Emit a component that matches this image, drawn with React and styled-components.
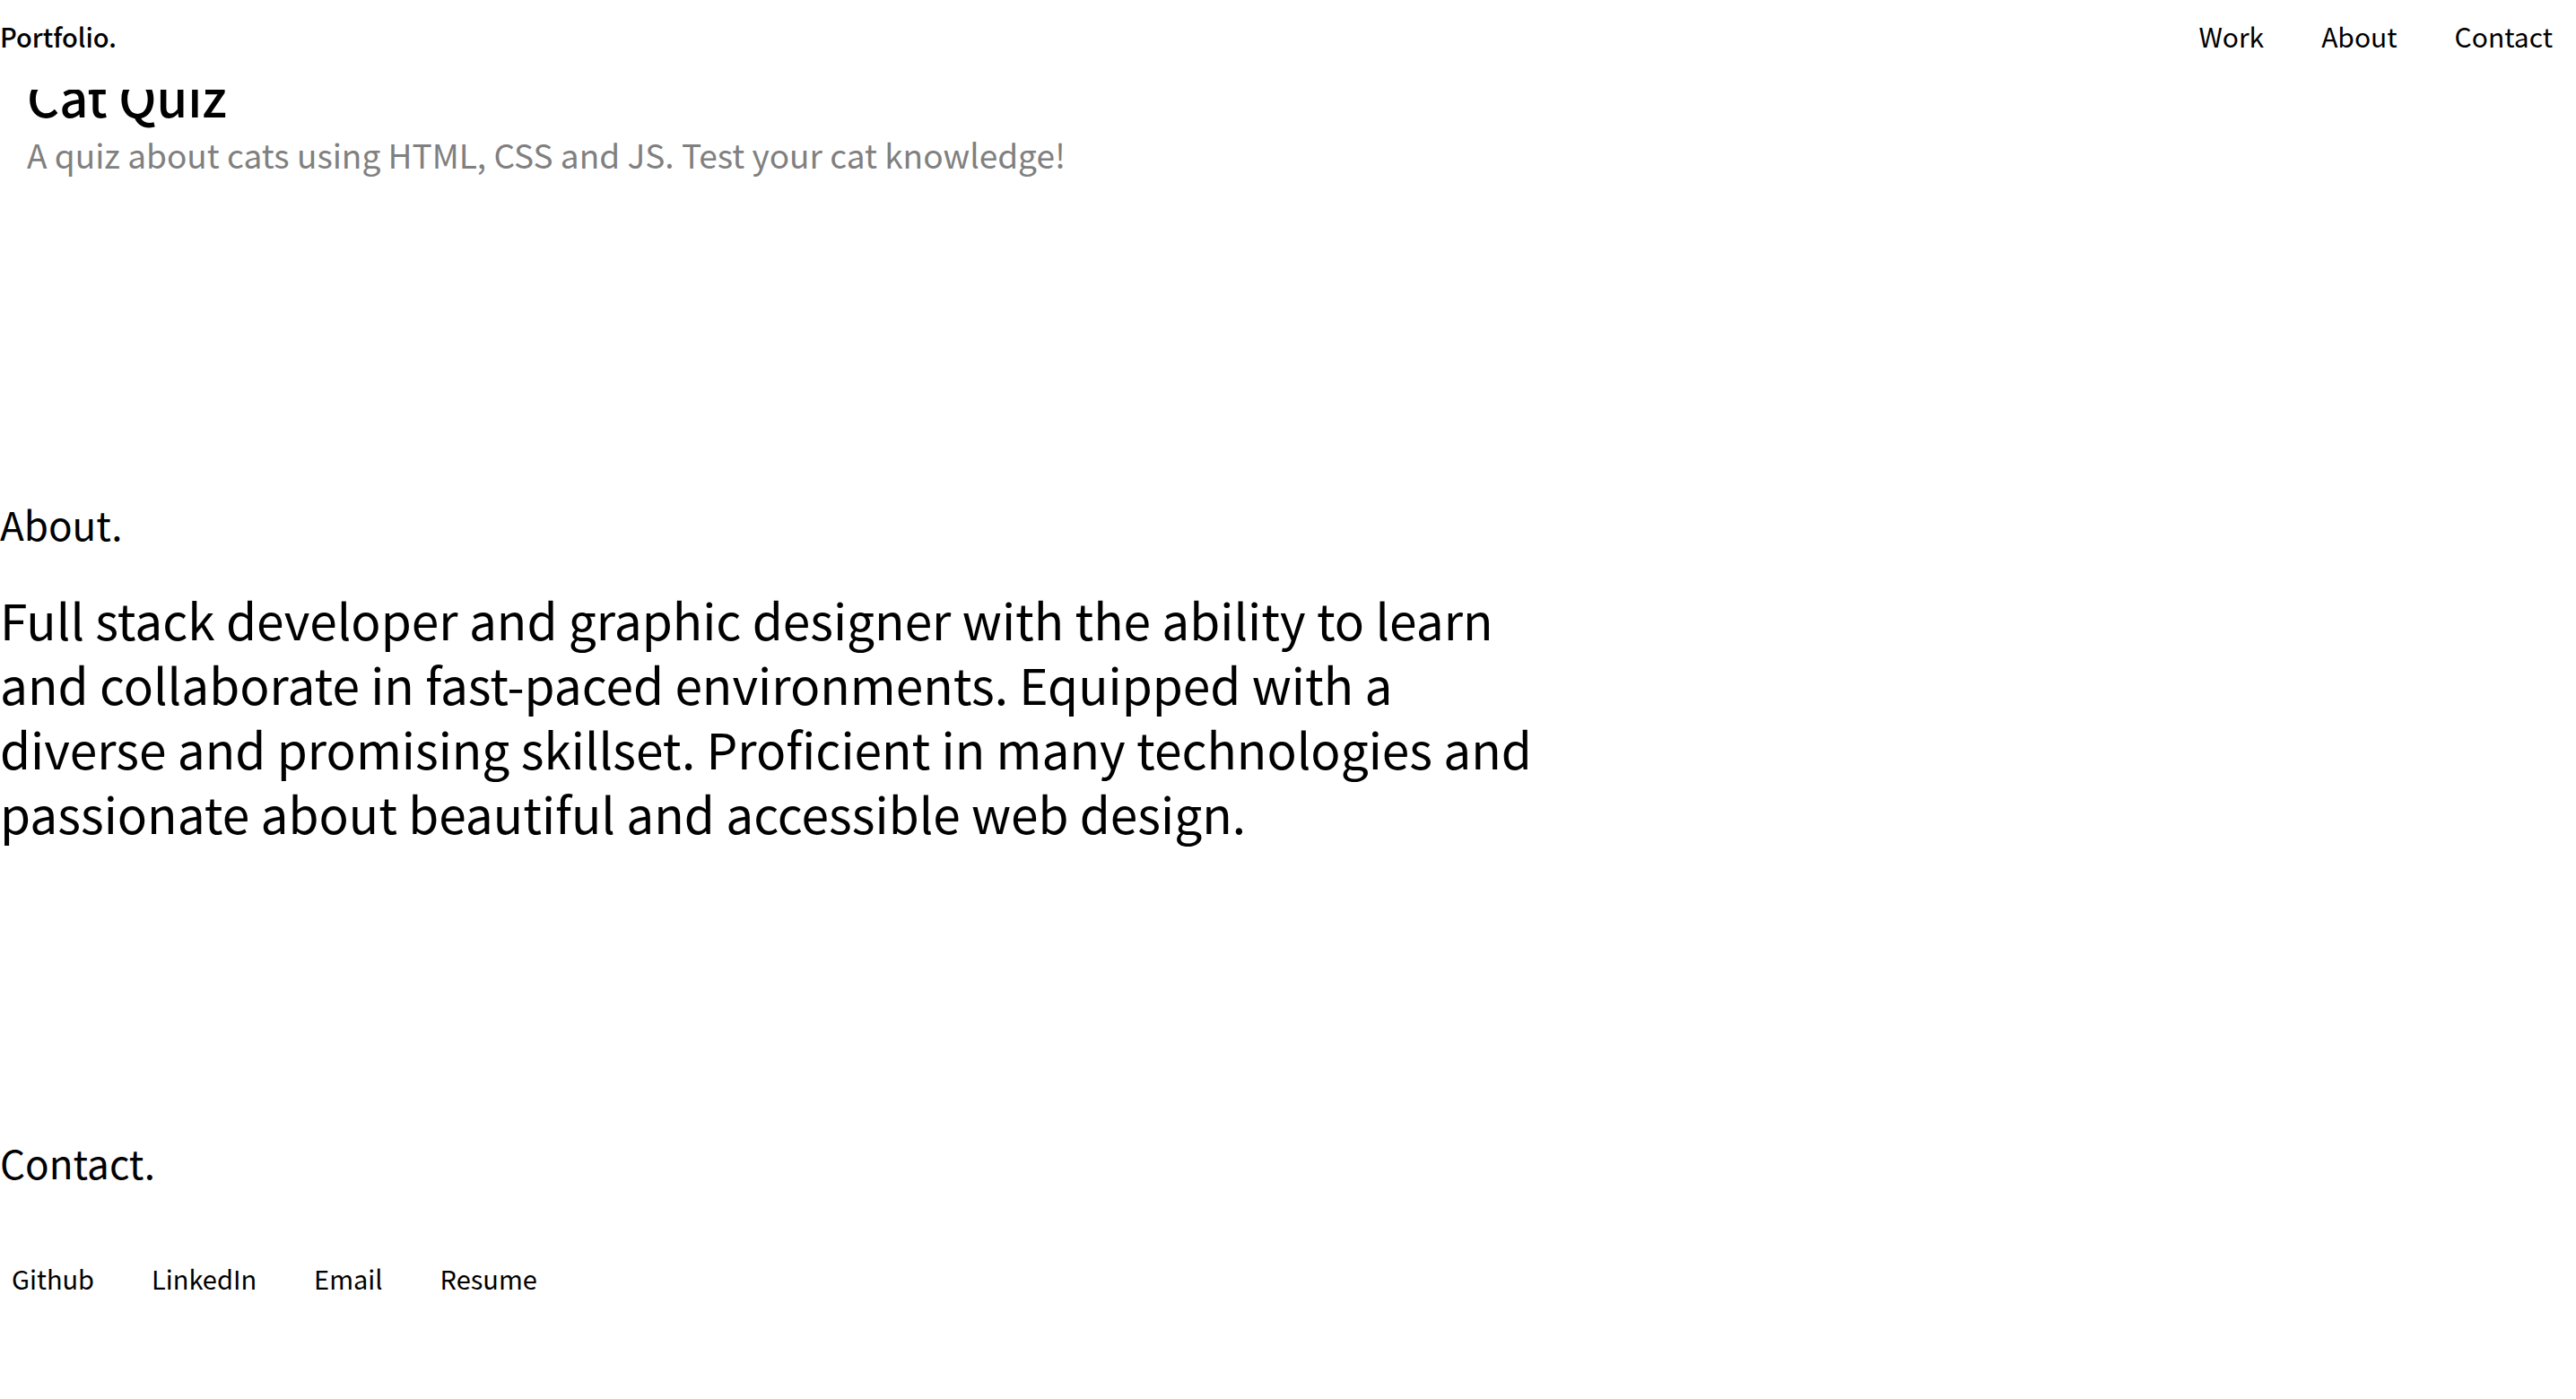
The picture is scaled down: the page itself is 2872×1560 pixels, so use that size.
import React from "react";
import styled, { createGlobalStyle } from "styled-components";

const GlobalStyle = createGlobalStyle`
  body {
    margin: 0;
    background: #fff;
    color: #000;
    font-family: "Noto Sans CJK SC", "Noto Sans", sans-serif;
    font-size: 30px;
    line-height: 36px;
  }
`;

const Header = styled.header`
  position: fixed;
  inset: 0 0 auto 0;
  z-index: 1;
  display: flex;
  justify-content: space-between;
  padding: 22px 0 42px;
  background: #fff;
`;

const Brand = styled.a`
  color: inherit;
  text-decoration: none;
  font-size: 29px;
  font-weight: 500;
`;

const LinkRow = styled.nav`
  display: flex;
  gap: 64px;
  font-size: ${(p) => (p.$end ? "30px" : "29px")};
  padding: 0 ${(p) => (p.$end ? "26px" : "0")} 0 ${(p) => (p.$end ? "0" : "13px")};
`;

const TextLink = styled.a`
  color: inherit;
  text-decoration: none;
`;

const Main = styled.main`
  padding-top: 74px;
`;

const Project = styled.article`
  padding-left: 30px;
`;

const ProjectTitle = styled.h3`
  margin: 0 0 10px;
  font-size: 56px;
  line-height: 66px;
  font-weight: 500;
`;

const ProjectText = styled.p`
  margin: 0;
  color: #808080;
  font-size: 37px;
  line-height: 44px;
`;

const Section = styled.section`
  padding-top: ${(p) => p.$space}px;
`;

const SectionTitle = styled.h2`
  margin: 0;
  font-size: 44px;
  line-height: 54px;
  font-weight: 400;
`;

const Bio = styled.p`
  margin: 43px 0 0;
  max-width: 60%;
  font-size: 55px;
  line-height: 72px;
`;

const ContactLinks = styled.div`
  padding: 84px 0 100px;
`;

const pages = ["Work", "About", "Contact"];
const contacts = ["Github", "LinkedIn", "Email", "Resume"];

export default function App() {
  return (
    <>
      <GlobalStyle />
      <Header>
        <Brand href="#">Portfolio.</Brand>
        <LinkRow $end aria-label="Main">
          {pages.map((name) => (
            <TextLink key={name} href={`#${name.toLowerCase()}`}>{name}</TextLink>
          ))}
        </LinkRow>
      </Header>
      <Main>
        <Project id="work">
          <ProjectTitle>Cat Quiz</ProjectTitle>
          <ProjectText>A quiz about cats using HTML, CSS and JS. Test your cat knowledge!</ProjectText>
        </Project>
        <Section id="about" $space={363}>
          <SectionTitle>About.</SectionTitle>
          <Bio>
            Full stack developer and graphic designer with the ability to learn and
            collaborate in fast-paced environments. Equipped with a diverse and
            promising skillset. Proficient in many technologies and passionate about
            beautiful and accessible web design.
          </Bio>
        </Section>
        <Section id="contact" $space={327}>
          <SectionTitle>Contact.</SectionTitle>
          <ContactLinks>
            <LinkRow aria-label="Contact">
              {contacts.map((name) => (
                <TextLink key={name} href={`#${name.toLowerCase()}`}>{name}</TextLink>
              ))}
            </LinkRow>
          </ContactLinks>
        </Section>
      </Main>
    </>
  );
}
